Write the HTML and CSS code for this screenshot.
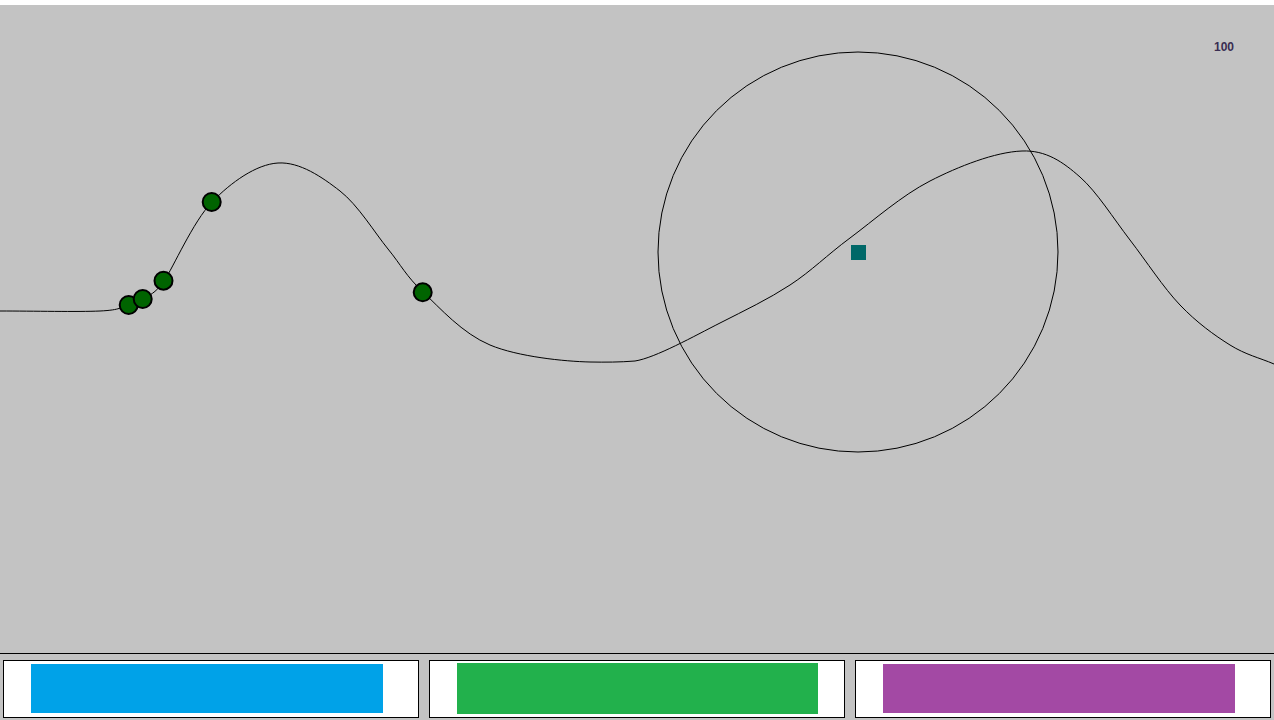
FILE: index.html
```html
<!DOCTYPE html>
<html>
<head>
<meta charset="utf-8">
<link rel="stylesheet" href="styles.css">
</head>
<body>
<div class="top-strip"></div>
<main class="stage">
  <svg class="scene" width="1274" height="648" viewBox="0 5 1274 648" xmlns="http://www.w3.org/2000/svg">
    <path class="track" d="M0,311 C33,311 78.7,312 100,311 C121.3,310 120.8,307 128,305 C135.2,303 137,303 143,299 C149,295 155,294 164,281 C173,268 193,221.7 212,202 C231,182.3 256.2,164.3 278,163 C299.8,161.7 322,177 340,191 C358,205 374.7,232.7 388,249 C401.3,265.3 406,276 423,292 C440,308 462.2,333.3 490,345 C517.8,356.7 565,361.5 590,362 C605,362.3 620,362.2 635,361 C655,358 695,335.7 720,323 C745,310.3 768.3,299.2 790,285 C811.7,270.8 826.7,255.3 850,238 C873.3,220.7 901.7,195.5 930,181 C958.3,166.5 995,152 1022,151 C1046,150 1063,162 1080,177 C1097,192 1113.3,218.3 1130,240 C1146.7,261.7 1163.3,287.5 1180,305 C1196.7,322.5 1214.3,335.2 1230,345 C1245.7,354.8 1259.3,357.7 1274,364"/>
    <circle class="range" cx="858" cy="252" r="200"/>
    <rect class="target" x="851" y="245" width="15" height="15"/>
    <circle class="dot" cx="128.7" cy="305" r="9"/>
    <circle class="dot" cx="142.7" cy="299" r="9"/>
    <circle class="dot" cx="163.5" cy="280.7" r="9"/>
    <circle class="dot" cx="211.7" cy="202" r="9"/>
    <circle class="dot" cx="422.7" cy="292.3" r="9"/>
    <text class="score" x="1214" y="51">100</text>
  </svg>
</main>
<footer class="panel-bar">
  <div class="panel"><div class="meter meter-blue" style="width:352px"></div></div>
  <div class="panel"><div class="meter meter-green" style="width:361px"></div></div>
  <div class="panel"><div class="meter meter-purple" style="width:352px"></div></div>
</footer>
</body>
</html>
```
FILE: styles.css
```css
html, body {
  margin: 0;
  padding: 0;
  background: #ffffff;
  width: 1274px;
  height: 720px;
  overflow: hidden;
  font-family: "Liberation Sans", Arial, sans-serif;
}

.top-strip {
  height: 5px;
  background: #ffffff;
}

.stage {
  height: 648px;
  background: #c3c3c3;
}

.scene {
  display: block;
}

.track {
  fill: none;
  stroke: #000000;
  stroke-width: 1;
}

.range {
  fill: none;
  stroke: #000000;
  stroke-width: 1;
}

.target {
  fill: #006868;
}

.dot {
  fill: #006400;
  stroke: #000000;
  stroke-width: 2;
}

.score {
  font-family: "Liberation Sans", Arial, sans-serif;
  font-weight: bold;
  font-size: 12px;
  fill: #3a2d52;
}

.panel-bar {
  background: #c3c3c3;
  border-top: 1px solid #000000;
  height: 67px;
  box-sizing: border-box;
  padding: 6px 3px 2px 3px;
  display: flex;
  gap: 10px;
}

.panel {
  width: 416px;
  height: 58px;
  box-sizing: border-box;
  border: 1px solid #000000;
  background: #ffffff;
  padding-left: 27px;
  display: flex;
  align-items: flex-start;
}

.meter-blue {
  margin-top: 3px;
  height: 49px;
  background: #00a2e8;
}

.meter-green {
  margin-top: 2px;
  height: 51px;
  background: #22b14c;
}

.meter-purple {
  margin-top: 3px;
  height: 49px;
  background: #a349a4;
}
```
